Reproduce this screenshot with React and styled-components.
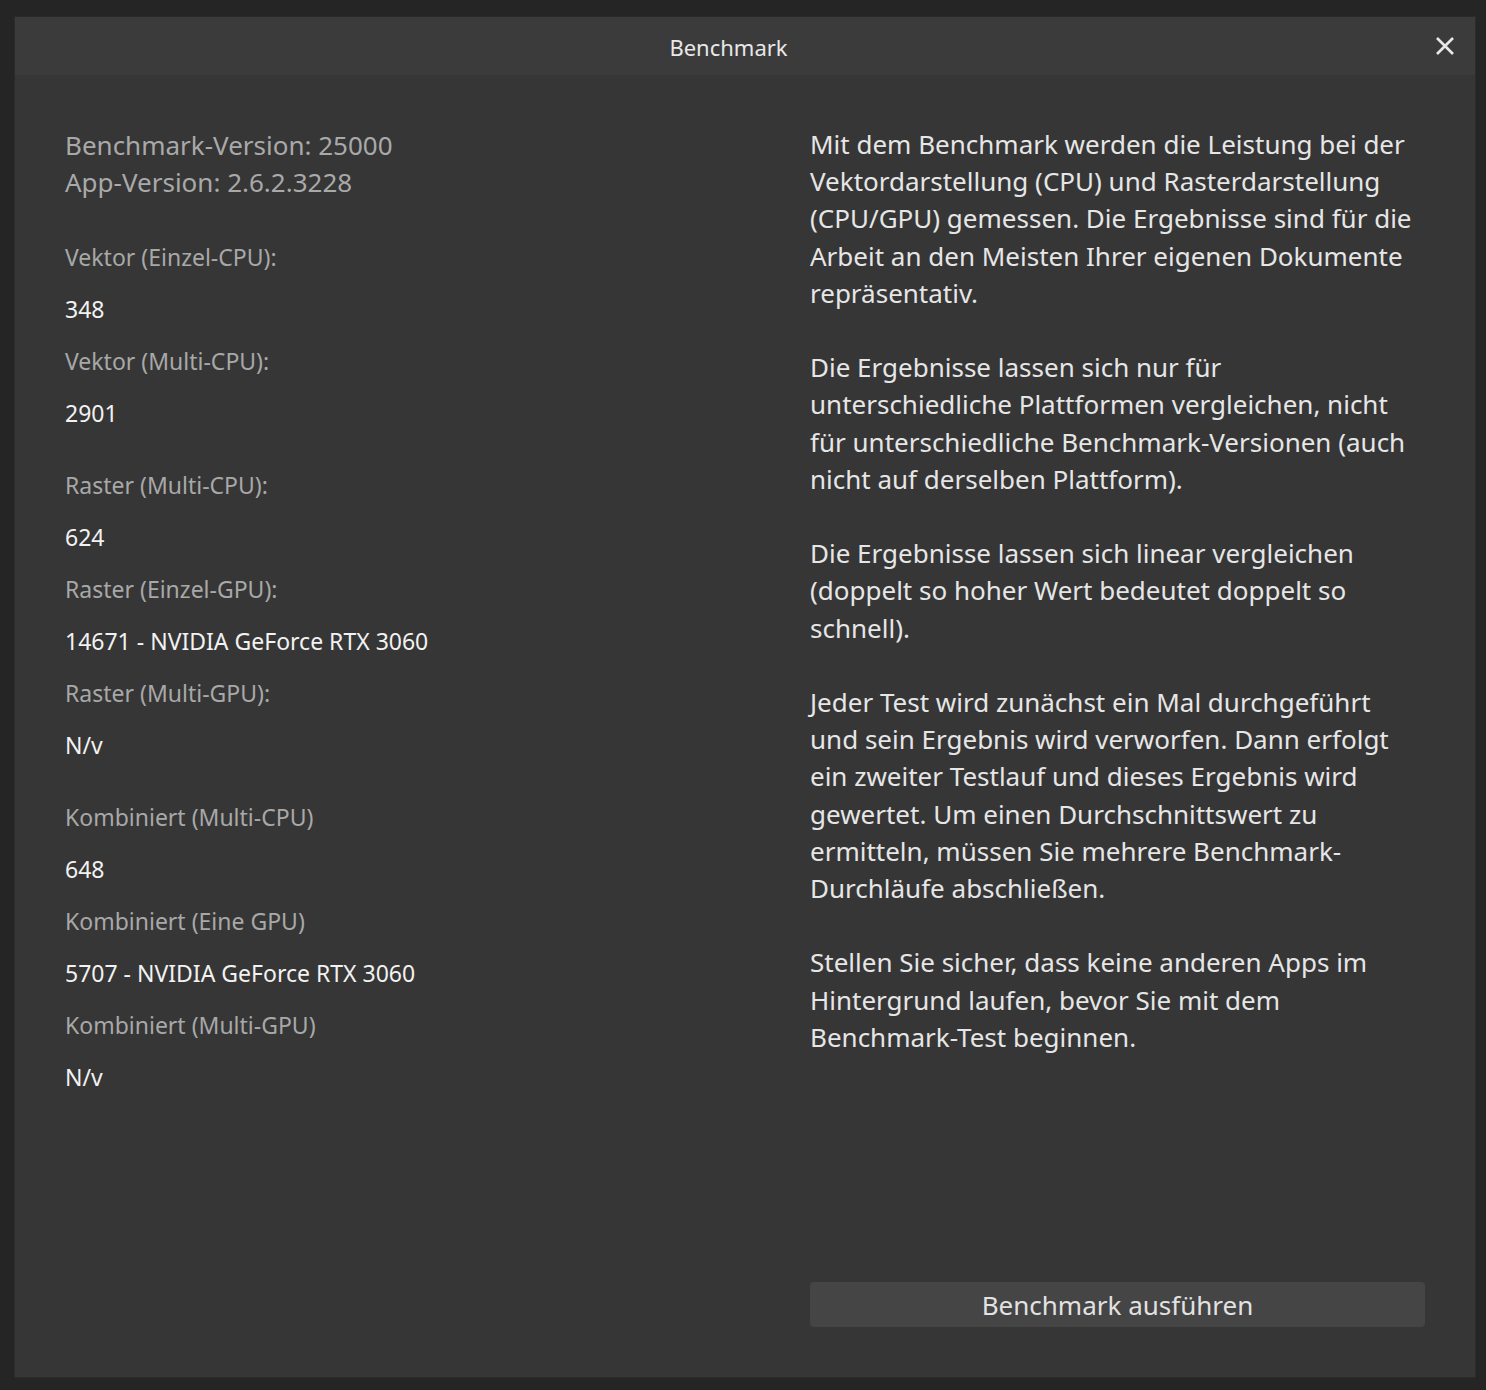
import styled, { createGlobalStyle } from "styled-components"

const GlobalStyle = createGlobalStyle`
  html, body {
    margin: 0;
    padding: 0;
    background: #252525;
  }
  body {
    font-family: "Noto Sans", "Open Sans", sans-serif;
  }
`

const stats = [
  [
    { label: "Vektor (Einzel-CPU):", value: "348" },
    { label: "Vektor (Multi-CPU):", value: "2901" },
  ],
  [
    { label: "Raster (Multi-CPU):", value: "624" },
    { label: "Raster (Einzel-GPU):", value: "14671 - NVIDIA GeForce RTX 3060" },
    { label: "Raster (Multi-GPU):", value: "N/v" },
  ],
  [
    { label: "Kombiniert (Multi-CPU)", value: "648" },
    { label: "Kombiniert (Eine GPU)", value: "5707 - NVIDIA GeForce RTX 3060" },
    { label: "Kombiniert (Multi-GPU)", value: "N/v" },
  ],
]

// lines kept as in the original dialog so the wrapping matches
const paragraphs = [
  [
    "Mit dem Benchmark werden die Leistung bei der",
    "Vektordarstellung (CPU) und Rasterdarstellung",
    "(CPU/GPU) gemessen. Die Ergebnisse sind für die",
    "Arbeit an den Meisten Ihrer eigenen Dokumente",
    "repräsentativ.",
  ],
  [
    "Die Ergebnisse lassen sich nur für",
    "unterschiedliche Plattformen vergleichen, nicht",
    "für unterschiedliche Benchmark-Versionen (auch",
    "nicht auf derselben Plattform).",
  ],
  [
    "Die Ergebnisse lassen sich linear vergleichen",
    "(doppelt so hoher Wert bedeutet doppelt so",
    "schnell).",
  ],
  [
    "Jeder Test wird zunächst ein Mal durchgeführt",
    "und sein Ergebnis wird verworfen. Dann erfolgt",
    "ein zweiter Testlauf und dieses Ergebnis wird",
    "gewertet. Um einen Durchschnittswert zu",
    "ermitteln, müssen Sie mehrere Benchmark-",
    "Durchläufe abschließen.",
  ],
  [
    "Stellen Sie sicher, dass keine anderen Apps im",
    "Hintergrund laufen, bevor Sie mit dem",
    "Benchmark-Test beginnen.",
  ],
]

export default function App() {
  return (
    <>
      <GlobalStyle />
      <Screen>
        <Dialog>
          <TitleBar>
            <Title>Benchmark</Title>
            <CloseButton aria-label="Schließen">
              <svg width="20" height="18" viewBox="0 0 20 18">
                <path d="M2 1 L18 17 M18 1 L2 17" stroke="#e8e8e8" strokeWidth="2.6" />
              </svg>
            </CloseButton>
          </TitleBar>
          <Body>
            <LeftCol>
              <Versions>
                <div>Benchmark-Version: 25000</div>
                <div>App-Version: 2.6.2.3228</div>
              </Versions>
              {stats.map((group, gi) => (
                <Group key={gi}>
                  {group.map((s) => (
                    <Stat key={s.label}>
                      <Label>{s.label}</Label>
                      <Value>{s.value}</Value>
                    </Stat>
                  ))}
                </Group>
              ))}
            </LeftCol>
            <RightCol>
              <Text>
                {paragraphs.map((lines, i) => (
                  <Para key={i}>
                    {lines.map((l) => (
                      <Line key={l}>{l}</Line>
                    ))}
                  </Para>
                ))}
              </Text>
              <RunButton>Benchmark ausführen</RunButton>
            </RightCol>
          </Body>
        </Dialog>
      </Screen>
    </>
  )
}

const Screen = styled.div`
  width: 1486px;
  height: 1390px;
  padding: 17px 11px 13px 15px;
  box-sizing: border-box;
  background: #252525;
`

const Dialog = styled.div`
  width: 1460px;
  height: 1360px;
  background: #363636;
  display: flex;
  flex-direction: column;
  box-shadow: 0 0 0 1px #2b2b2b;
`

const TitleBar = styled.div`
  height: 58px;
  flex-shrink: 0;
  background: #3b3b3b;
  display: flex;
  align-items: center;
  justify-content: center;
  padding-right: 33px;
  position: relative;
`

const Title = styled.div`
  color: #e8e8e8;
  font-size: 22px;
  margin-top: 2px;
`

const CloseButton = styled.button`
  position: absolute;
  right: 20px;
  top: 20px;
  width: 20px;
  height: 18px;
  padding: 0;
  border: none;
  background: none;
  display: flex;
`

const Body = styled.div`
  flex: 1;
  display: grid;
  grid-template-columns: 1fr 615px;
  column-gap: 80px;
  padding: 52px 50px 50px 50px;
`

const LeftCol = styled.div`
  display: flex;
  flex-direction: column;
`

const Versions = styled.div`
  color: #a9a9a9;
  font-size: 26px;
  line-height: 37px;
  margin-bottom: 30px;
`

const Group = styled.div`
  display: flex;
  flex-direction: column;
  margin-bottom: 20px;
`

const Stat = styled.div`
  display: flex;
  flex-direction: column;
`

const Label = styled.div`
  color: #a8a8a8;
  font-size: 23px;
  line-height: 52px;
`

const Value = styled.div`
  color: #f2f2f2;
  font-size: 23px;
  line-height: 52px;
`

const RightCol = styled.div`
  display: flex;
  flex-direction: column;
  justify-content: space-between;
`

const Text = styled.div`
  color: #e6e6e6;
  font-size: 26px;
  line-height: 37.2px;
  margin-top: -1px;
`

const Para = styled.div`
  margin: 0 0 37.2px 0;
`

const Line = styled.div`
  white-space: nowrap;
`

const RunButton = styled.button`
  height: 45px;
  width: 100%;
  border: none;
  border-radius: 4px;
  background: #454545;
  color: #e2e2e2;
  font-family: "Noto Sans", "Open Sans", sans-serif;
  font-size: 26px;
  cursor: pointer;
`
